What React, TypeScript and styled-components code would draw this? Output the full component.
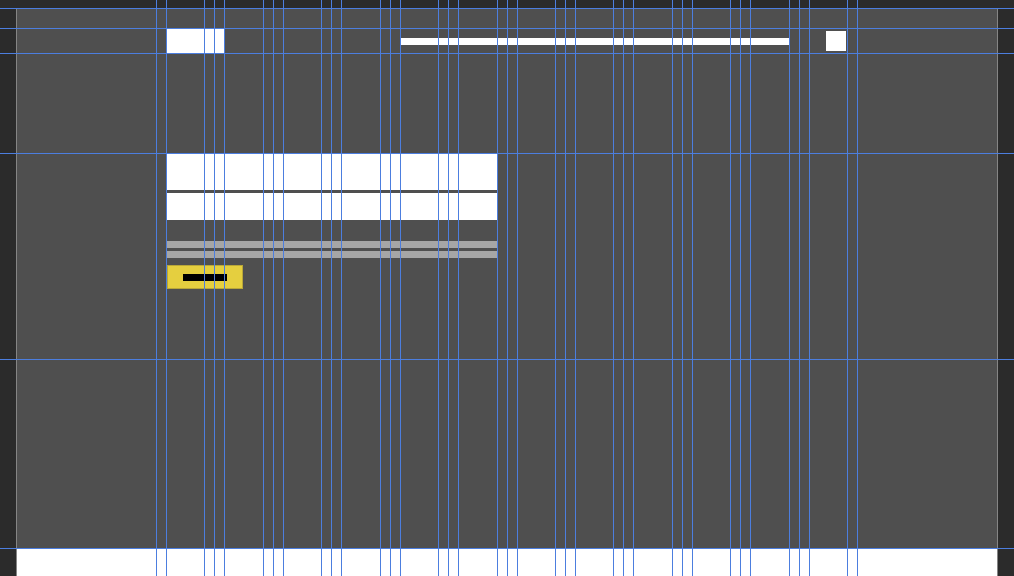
import React from "react";
import styled, { createGlobalStyle } from "styled-components";

const GUIDE = "#4c7edf";

const Global = createGlobalStyle`
  html, body {
    margin: 0;
    padding: 0;
    background: #2b2b2b;
    font-family: "Liberation Sans", Arial, sans-serif;
    overflow: hidden;
  }
  * { box-sizing: border-box; }
`;

const Stage = styled.div`
  position: relative;
  width: 1014px;
  height: 576px;
  padding: 8px 0 0 16px;
  overflow: hidden;
  background: #2b2b2b;
`;

const Canvas = styled.div`
  width: 982px;
  height: 568px;
  border: 1px solid #858585;
  border-bottom: none;
  background: #4f4f4f;
  display: flex;
  flex-direction: column;
`;

const Container = styled.div`
  width: 701px;
  margin-left: 139px;
  padding: 0 10px;
`;

const Header = styled.header`
  margin-top: 19px;
  height: 25px;
  display: grid;
  grid-template-columns: repeat(12, minmax(0, 1fr));
  column-gap: 20px;
  align-items: center;
`;

const Logo = styled.div`
  grid-column: 1 / 2;
  width: 58px;
  height: 25px;
  margin-left: 1px;
  background: #ffffff;
`;

const Nav = styled.nav`
  grid-column: 5 / 12;
  height: 7px;
  margin-top: 1px;
  background: #ffffff;
`;

const IconBox = styled.div`
  grid-column: 12 / 13;
  justify-self: end;
  width: 20px;
  height: 20px;
  margin: 1px 1px 0 0;
  background: #ffffff;
`;

const Main = styled.main`
  margin-top: 100px;
  display: grid;
  grid-template-columns: repeat(12, minmax(0, 1fr));
  column-gap: 20px;
`;

const Form = styled.form`
  grid-column: 1 / 7;
  display: flex;
  flex-direction: column;
`;

const Field = styled.div<{ $h: number; $gap?: number }>`
  height: ${(p) => p.$h}px;
  margin-top: ${(p) => p.$gap ?? 0}px;
  background: #ffffff;
`;

const Line = styled.div<{ $gap?: number }>`
  height: 7px;
  margin-top: ${(p) => p.$gap ?? 0}px;
  background: #a6a6a6;
`;

const Button = styled.button`
  margin-top: 7px;
  margin-left: 1px;
  align-self: flex-start;
  height: 24px;
  padding: 0 15px 0 15px;
  border: 1px solid #b9a738;
  background: #e5cf3f;
  display: flex;
  align-items: center;
  cursor: pointer;
`;

const ButtonLabel = styled.span`
  display: block;
  width: 44px;
  height: 7px;
  margin-top: 1px;
  background: #000000;
`;

const Footer = styled.footer`
  margin-top: auto;
  height: 28px;
  background: #ffffff;
`;

const Guides = styled.div`
  position: absolute;
  inset: 0;
  pointer-events: none;
`;

const ColumnGuide = styled.div<{ $x: number }>`
  position: absolute;
  top: 0;
  bottom: 0;
  left: ${(p) => p.$x}px;
  width: 1px;
  background: ${GUIDE};
`;

const RowGuide = styled.div<{ $y: number }>`
  position: absolute;
  left: 0;
  right: 0;
  top: ${(p) => p.$y}px;
  height: 1px;
  background: ${GUIDE};
`;

const rows = [8, 28, 53, 153, 359, 548];

// 12-column grid: 10px container padding, 20px gutters, ~38.4px columns
const START = 166;
const PITCH = (847 - 166 + 20) / 12;
const columns: number[] = [156, 857];
for (let i = 0; i < 12; i++) {
  const left = START + i * PITCH;
  columns.push(Math.round(left));
  columns.push(Math.round(left + PITCH - 20));
  if (i < 11) columns.push(Math.round(left + PITCH - 10));
}

export default function App() {
  return (
    <>
      <Global />
      <Stage>
        <Canvas>
          <Container>
            <Header>
              <Logo />
              <Nav />
              <IconBox />
            </Header>
            <Main>
              <Form onSubmit={(e) => e.preventDefault()}>
                <Field $h={37} />
                <Field $h={27} $gap={3} />
                <Line $gap={21} />
                <Line $gap={3} />
                <Button type="button" aria-label="Submit">
                  <ButtonLabel />
                </Button>
              </Form>
            </Main>
          </Container>
          <Footer />
        </Canvas>
        <Guides>
          {columns.map((x) => (
            <ColumnGuide key={x} $x={x} />
          ))}
          {rows.map((y) => (
            <RowGuide key={y} $y={y} />
          ))}
        </Guides>
      </Stage>
    </>
  );
}
